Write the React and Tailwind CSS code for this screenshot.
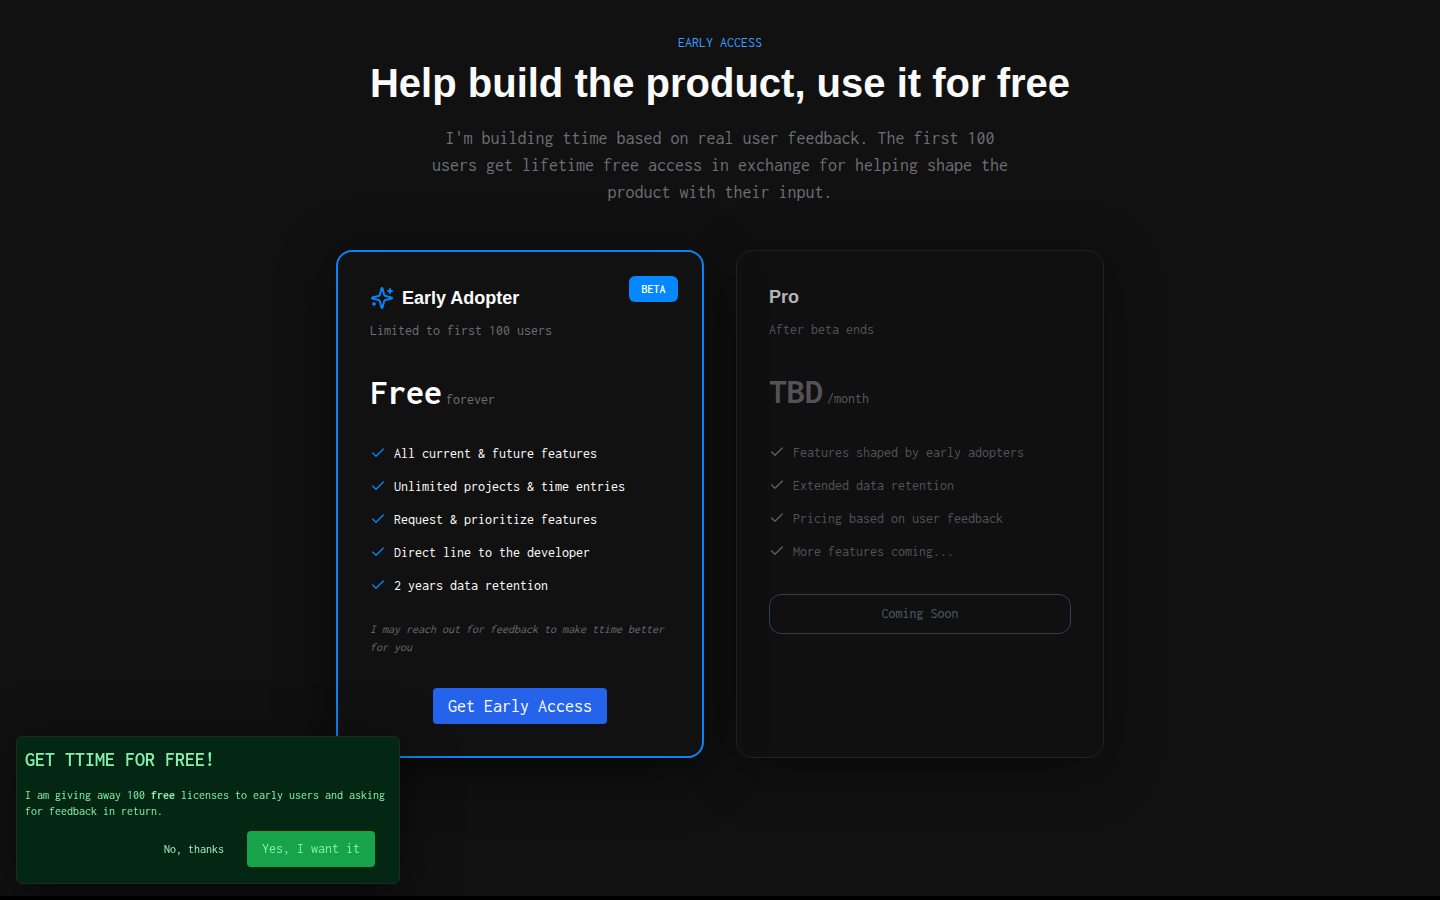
import React from "react";
import { Check } from "lucide-react";

const earlyFeatures = [
  "All current & future features",
  "Unlimited projects & time entries",
  "Request & prioritize features",
  "Direct line to the developer",
  "2 years data retention",
];

const proFeatures = [
  "Features shaped by early adopters",
  "Extended data retention",
  "Pricing based on user feedback",
  "More features coming...",
];

function SparklesIcon() {
  return (
    <svg
      className="size-6 shrink-0 text-[#0a84f5]"
      viewBox="0 0 24 24"
      fill="none"
      stroke="currentColor"
      strokeWidth="2"
      strokeLinecap="round"
      strokeLinejoin="round"
      aria-hidden="true"
    >
      <path d="M9.937 15.5A2 2 0 0 0 8.5 14.063l-6.135-1.582a.5.5 0 0 1 0-.962L8.5 9.936A2 2 0 0 0 9.937 8.5l1.582-6.135a.5.5 0 0 1 .963 0L14.063 8.5A2 2 0 0 0 15.5 9.937l6.135 1.581a.5.5 0 0 1 0 .964L15.5 14.063a2 2 0 0 0-1.437 1.437l-1.582 6.135a.5.5 0 0 1-.963 0z" />
      <path d="M20 3v4" />
      <path d="M22 5h-4" />
      <path d="M4 17v2" />
      <path d="M5 18H3" />
    </svg>
  );
}

function FeatureList({ items, iconClass, textClass }) {
  return (
    <ul className="mt-8 flex flex-col gap-3">
      {items.map((item) => (
        <li key={item} className="flex items-start gap-2">
          <Check size={16} className={iconClass} aria-hidden="true" />
          <span className={textClass}>{item}</span>
        </li>
      ))}
    </ul>
  );
}

function Price({ amount, period, amountClass, periodClass }) {
  return (
    <p className="mt-8 flex h-[38px] items-baseline gap-1">
      <span className={amountClass}>{amount}</span>
      <span className={periodClass}>{period}</span>
    </p>
  );
}

function EarlyAdopterCard() {
  return (
    <article className="relative rounded-2xl border-2 border-[#0b84f3] bg-[#111111] p-8 shadow-[0_12px_60px_rgba(0,0,0,0.4),0_12px_32px_-16px_rgba(0,0,0,0.6)]">
      <span className="absolute top-6 right-6 flex h-[26px] w-[49px] items-center justify-center rounded-md bg-[#0588ff] text-xs font-semibold text-white">
        BETA
      </span>
      <div className="flex h-7 items-center gap-2">
        <SparklesIcon />
        <h2 className="font-['Liberation_Sans',sans-serif] text-lg/[28px] font-bold text-[#fafafa]">Early Adopter</h2>
      </div>
      <p className="mt-2 text-sm/[21px] text-[#6f6e77]">Limited to first 100 users</p>
      <Price
        amount="Free"
        period="forever"
        amountClass="text-4xl/[38px] font-bold text-white"
        periodClass="text-sm/[21px] text-[#6f6e77]"
      />
      <FeatureList
        items={earlyFeatures}
        iconClass="mt-0.5 shrink-0 text-[#0b84f3]"
        textClass="text-sm/[21px] text-white"
      />
      <p className="mt-6 text-xs/[18px] text-[#6a6972] italic">
        I may reach out for feedback to make ttime better for you
      </p>
      <div className="mt-8 flex justify-center">
        <button type="button" className="h-9 rounded-sm bg-[#2563eb] px-[15px] text-lg text-white">
          Get Early Access
        </button>
      </div>
    </article>
  );
}

function ProCard() {
  return (
    <article className="rounded-2xl border border-[#222222] bg-[#101010] p-8 shadow-[0_12px_60px_rgba(0,0,0,0.28),0_12px_32px_-16px_rgba(0,0,0,0.4)]">
      <h2 className="font-['Liberation_Sans',sans-serif] text-lg/[28px] font-bold text-[#b4b4b4]">Pro</h2>
      <p className="mt-2 text-sm/[21px] text-[#535258]">After beta ends</p>
      <Price
        amount="TBD"
        period="/month"
        amountClass="text-4xl/[38px] font-bold text-[#535258]"
        periodClass="text-sm/[21px] text-[#5a595f]"
      />
      <FeatureList
        items={proFeatures}
        iconClass="mt-0.5 shrink-0 text-[#606060]"
        textClass="text-sm/[21px] text-[#535258]"
      />
      <button
        type="button"
        disabled
        className="mt-8 h-10 w-full rounded-xl border border-[#2a4157] text-sm text-[#4a5d70]"
      >
        Coming Soon
      </button>
    </article>
  );
}

function OfferToast() {
  return (
    <aside className="fixed bottom-4 left-4 w-96 max-w-full rounded-md border border-[#1a2e20] bg-[#032713] px-2 pt-2 pb-4 text-[#86efac] shadow-[0_12px_60px_rgba(0,0,0,0.4),0_12px_32px_-16px_rgba(0,0,0,0.6)]">
      <h2 className="text-xl/[30px] font-semibold">GET TTIME FOR FREE!</h2>
      <p className="mt-3 text-xs/[16px]">
        I am giving away 100 <strong className="font-bold">free</strong> licenses to early users and asking for
        feedback in return.
      </p>
      <div className="mt-3 flex items-center justify-end gap-2 pr-4">
        <button type="button" className="h-9 px-[15px] text-xs text-[#a7f3c3]">
          No, thanks
        </button>
        <button type="button" className="h-9 rounded-sm bg-[#16a34a] px-[15px] text-sm">
          Yes, I want it
        </button>
      </div>
    </aside>
  );
}

export default function App() {
  return (
    <div className="min-h-screen bg-black pb-1 font-['Inconsolata','Noto_Sans_Mono_CJK_JP','Liberation_Mono',monospace]">
      <main className="flex min-h-[calc(100vh-4px)] flex-col items-center bg-[#111111] px-4 pt-8 pb-16">
        <p className="text-sm/[21px] text-[#3b9eff]">EARLY ACCESS</p>
        <h1 className="mt-2 text-center font-['Liberation_Sans',sans-serif] text-[40px]/[44px] font-bold text-[#fafafa]">
          Help build the product, use it for free
        </h1>
        <p className="mt-5 max-w-[600px] text-center text-lg/[27px] text-[#6f6e77]">
          I'm building ttime based on real user feedback. The first 100 users get lifetime free access in exchange for
          helping shape the product with their input.
        </p>
        <section className="mt-11 grid w-full max-w-3xl grid-cols-1 gap-8 md:grid-cols-2">
          <EarlyAdopterCard />
          <ProCard />
        </section>
      </main>
      <OfferToast />
    </div>
  );
}
